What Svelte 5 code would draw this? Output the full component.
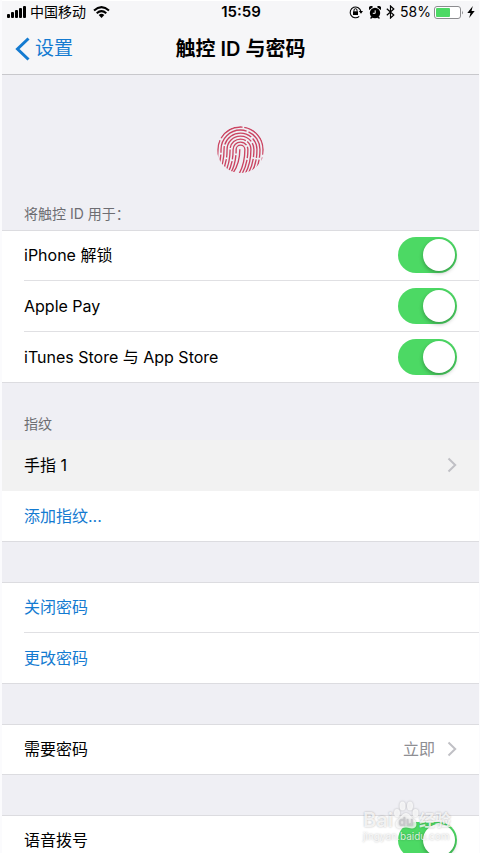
<script lang="ts">
  type Ridge = { r: number; dash: string };

  let unlock = $state(true);
  let applePay = $state(true);
  let stores = $state(true);
  let voiceDial = $state(true);

  const ridges: Ridge[] = [
    { r: 67, dash: '104 7 76 5 108 8 200' },
    { r: 58, dash: '62 5 118 6 90 6 200' },
    { r: 49, dash: '86 5 96 6 60 5 200' },
    { r: 40, dash: '48 5 122 6 42 5 200' },
    { r: 31, dash: '76 5 60 5 300' },
    { r: 22, dash: '42 5 84 5 34 5 200' },
    { r: 13, dash: '60 5 200' },
  ];

  function ridgePath(r: number) {
    const left = 120 - r;
    const right = 120 + r;
    return `M${left - 18} 176 Q${left} 148 ${left} 103 A${r} ${r} 0 0 1 ${right} 103 Q${right} 148 ${right - 20} 180`;
  }
</script>

{#snippet chevron()}
  <svg class="chevron" viewBox="0 0 10 16" aria-hidden="true">
    <path d="M1.5 1.5 8.2 8 1.5 14.5" fill="none" stroke="#c0c0c5" stroke-width="2" />
  </svg>
{/snippet}

<div class="screen">
  <header>
    <div class="status">
      <div class="status-side">
        <svg class="signal" viewBox="0 0 19 12" aria-hidden="true">
          <rect x="0" y="8" width="3" height="4" rx="1" />
          <rect x="4" y="6" width="3" height="6" rx="1" />
          <rect x="8" y="4" width="3" height="8" rx="1" />
          <rect x="12" y="2" width="3" height="10" rx="1" />
          <rect x="16" y="0" width="3" height="12" rx="1" />
        </svg>
        <span>中国移动</span>
        <svg class="wifi" viewBox="0 0 17 12" aria-hidden="true">
          <g fill="none" stroke="#000" stroke-width="2">
            <path d="M1 4.4Q8.5-2.2 16 4.4" />
            <path d="M3.7 7.2Q8.5 3 13.3 7.2" />
          </g>
          <path d="M5.7 9Q8.5 6.7 11.3 9L8.5 12Z" />
        </svg>
      </div>
      <time>15:59</time>
      <div class="status-side end">
        <svg class="lock" viewBox="0 0 14 14" aria-hidden="true">
          <path d="M10.2 11.4A5.4 5.4 0 1 1 11.9 6.4" fill="none" stroke="#000" stroke-width="1.1" />
          <path d="M9.8 6H14L12 8.800Z" />
          <path d="M4 6.300H9V10H4Z" />
          <path d="M5 6.500V5.200a1.500 1.500 0 0 1 3 0V6.500" fill="none" stroke="#000" />
        </svg>
        <svg class="alarm" viewBox="0 0 12 13" aria-hidden="true">
          <circle cx="6" cy="7" r="5.2" />
          <path d="M.3 4A2.200 2.200 0 0 1 4 .9ZM11.700 4A2.200 2.200 0 0 0 8 .9ZM2 10.500 1 12.500H2.800L4 11.500ZM10 10.500 11 12.500H9.200L8 11.500Z" />
          <path d="M6.200 4.300V7.300H3.800" fill="none" stroke="#fff" />
        </svg>
        <svg class="bluetooth" viewBox="0 0 9 14" aria-hidden="true">
          <path d="M.8 3.8 7.8 10 4.5 13V1L7.8 4 .8 10.200" fill="none" stroke="#000" stroke-width="1.2" />
        </svg>
        <span>58%</span>
        <svg class="battery" viewBox="0 0 30 13" aria-hidden="true">
          <rect x=".5" y=".5" width="26" height="12" rx="2.5" fill="#fff" stroke="#8c8c8f" />
          <rect x="2" y="2" width="14" height="9" rx="1" fill="#4cd964" />
          <path d="M28 4.500Q29.800 6.500 28 8.500Z" fill="#8c8c8f" />
        </svg>
        <svg class="bolt" viewBox="0 0 8 12" aria-hidden="true">
          <path d="M5.800 0 .3 7H3.500L2.200 12 7.700 5H4.500Z" />
        </svg>
      </div>
    </div>
    <nav>
      <a class="back" href="#settings">
        <svg viewBox="0 0 15 24" aria-hidden="true">
          <path d="M13.5 1.5 2.5 12 13.5 22.5" fill="none" stroke="#147bd1" stroke-width="3" />
        </svg>
        设置
      </a>
      <h1>触控 ID 与密码</h1>
    </nav>
  </header>

  <main>
    <div class="hero">
      <svg class="fingerprint" viewBox="50 33 140 140" aria-hidden="true">
        <clipPath id="finger">
          <circle cx="120" cy="103" r="70" />
        </clipPath>
        <g clip-path="url(#finger)" fill="none" stroke="#cb4562" stroke-width="4">
          {#each ridges as ridge}
            <path d={ridgePath(ridge.r)} stroke-dasharray={ridge.dash} />
          {/each}
          <path d="M92 180Q118 150 118 102" />
        </g>
      </svg>
    </div>

    <h2>将触控 ID 用于：</h2>
    <section class="group">
      <label class="row">iPhone 解锁 <input type="checkbox" bind:checked={unlock} /></label>
      <label class="row">Apple Pay <input type="checkbox" bind:checked={applePay} /></label>
      <label class="row">iTunes Store 与 App Store <input type="checkbox" bind:checked={stores} /></label>
    </section>

    <h2 class="fingers">指纹</h2>
    <section class="group flush">
      <button class="row pressed">手指 1 {@render chevron()}</button>
      <button class="row action">添加指纹...</button>
    </section>

    <section class="group spaced">
      <button class="row action">关闭密码</button>
      <button class="row action">更改密码</button>
    </section>

    <section class="group spaced">
      <button class="row">需要密码 <span class="value">立即 {@render chevron()}</span></button>
    </section>

    <section class="group spaced">
      <label class="row">语音拨号 <input type="checkbox" bind:checked={voiceDial} /></label>
    </section>
  </main>

  <div class="watermark">
    <div class="brand">
      <span>Bai</span>
      <svg viewBox="0 0 26 28" aria-hidden="true">
        <ellipse cx="4" cy="12" rx="3" ry="4" />
        <ellipse cx="9.5" cy="5" rx="3" ry="4.5" />
        <ellipse cx="17" cy="5" rx="3" ry="4.5" />
        <ellipse cx="22.5" cy="12" rx="3" ry="4" />
        <path d="M13 12C9 12 8.500 16 5 18.500C1 21.500 2 27.500 7 27.500C10 27.500 10 26.500 13 26.500S16 27.500 19 27.500C24 27.500 25 21.500 21 18.500C17.500 16 17 12 13 12Z" />
        <text x="13" y="25" text-anchor="middle">du</text>
      </svg>
      <span class="brand-cn">经验</span>
    </div>
    <div class="site">jingyan.baidu.com</div>
  </div>
</div>

<style>
  :global(body) {
    margin: 0;
    background: #efeff4;
  }

  .screen {
    position: relative;
    display: flex;
    flex-direction: column;
    height: 100vh;
    box-sizing: border-box;
    overflow: hidden;
    border-left: 2px solid #fbfbfd;
    border-right: 1px solid #fbfbfd;
    background: #efeff4;
    color: #000;
    font-family: Inter, "Noto Sans CJK SC", sans-serif;
    font-size: 16px;
  }

  header {
    flex: none;
    background: #f6f6f8;
    border-top: 1px solid #fff;
    border-bottom: 1px solid #c8c8cc;
  }

  .status {
    display: grid;
    grid-template-columns: 1fr auto 1fr;
    align-items: center;
    height: 22px;
    padding: 0 4px 0 5px;
    font-size: 14px;
    line-height: 20px;
  }

  .status-side {
    display: flex;
    align-items: center;
    gap: 4px;
  }

  .end {
    justify-content: flex-end;
  }

  time {
    font-size: 15px;
    font-weight: 600;
  }

  .signal {
    width: 19px;
    height: 12px;
  }

  .wifi {
    width: 17px;
    height: 12px;
    margin-left: 3px;
  }

  .lock {
    width: 14px;
    height: 14px;
    margin-right: 3px;
  }

  .alarm {
    width: 12px;
    height: 13px;
    margin-right: 2px;
  }

  .bluetooth {
    width: 9px;
    height: 14px;
    margin-right: 2px;
  }

  .battery {
    width: 30px;
    height: 13px;
  }

  .bolt {
    width: 8px;
    height: 12px;
  }

  .end {
    gap: 3px;
  }

  nav {
    display: grid;
    grid-template-columns: 1fr auto 1fr;
    align-items: center;
    height: 51px;
    padding: 0 13px;
  }

  .back {
    display: flex;
    align-items: center;
    gap: 5px;
    color: #147bd1;
    font-size: 19px;
    line-height: 28px;
    text-decoration: none;
  }

  .back svg {
    width: 15px;
    height: 24px;
  }

  h1 {
    margin: 0;
    font-size: 20px;
    font-weight: 600;
    line-height: 28px;
  }

  main {
    flex: 1;
    min-height: 0;
    overflow-y: auto;
    scrollbar-width: none;
  }

  .hero {
    display: flex;
    justify-content: center;
    padding: 51px 0 31px;
  }

  .fingerprint {
    width: 47px;
    height: 47px;
  }

  h2 {
    margin: 0;
    padding: 0 22px 6px;
    color: #6d6d72;
    font-size: 14px;
    font-weight: 400;
    line-height: 20px;
  }

  .fingers {
    padding-top: 31px;
  }

  .group {
    background: #fff;
    box-shadow: inset 0 1px #dcdce0, inset 0 -1px #dcdce0;
  }

  .flush {
    box-shadow: inset 0 -1px #dcdce0;
  }

  .spaced {
    margin-top: 40px;
  }

  .row {
    display: flex;
    align-items: center;
    justify-content: space-between;
    position: relative;
    box-sizing: border-box;
    width: 100%;
    height: 51px;
    padding: 0 22px 1px;
    border: 0;
    background: none;
    color: #000;
    font: inherit;
    line-height: 24px;
    text-align: left;
  }

  .row:not(:last-child)::after {
    content: '';
    position: absolute;
    right: 0;
    bottom: 0;
    left: 22px;
    height: 1px;
    background: #e0e0e3;
  }

  .pressed {
    background: #f2f2f2;
  }

  .row.pressed::after {
    display: none;
  }

  .action {
    color: #147bd1;
  }

  .value {
    display: flex;
    align-items: center;
    gap: 12px;
    color: #8e8e93;
  }

  .chevron {
    width: 10px;
    height: 16px;
  }

  input {
    appearance: none;
    display: flex;
    flex: none;
    box-sizing: border-box;
    width: 59px;
    height: 36px;
    margin: 0;
    padding: 2px;
    border-radius: 18px;
    background: #e5e5ea;
  }

  input::before {
    content: '';
    width: 32px;
    height: 32px;
    border-radius: 50%;
    background: #fff;
    box-shadow: 0 2px 4px rgba(0, 0, 0, 0.3);
  }

  input:checked {
    justify-content: flex-end;
    background: #4cd964;
  }

  .watermark {
    position: absolute;
    right: 28px;
    bottom: 10px;
    color: rgba(255, 255, 255, 0.8);
    text-shadow: 0 0 2px rgba(0, 0, 0, 0.3);
    pointer-events: none;
  }

  .brand {
    display: flex;
    align-items: flex-end;
    font-size: 20px;
    font-weight: 600;
    line-height: 18px;
  }

  .brand svg {
    width: 26px;
    height: 28px;
    fill: rgba(255, 255, 255, 0.8);
    filter: drop-shadow(0 0 1px rgba(0, 0, 0, 0.3));
  }

  .brand text {
    fill: #c8c8cc;
    font-size: 12px;
  }

  .brand-cn {
    font-size: 16px;
  }

  .site {
    font-size: 10px;
    line-height: 14px;
  }
</style>
